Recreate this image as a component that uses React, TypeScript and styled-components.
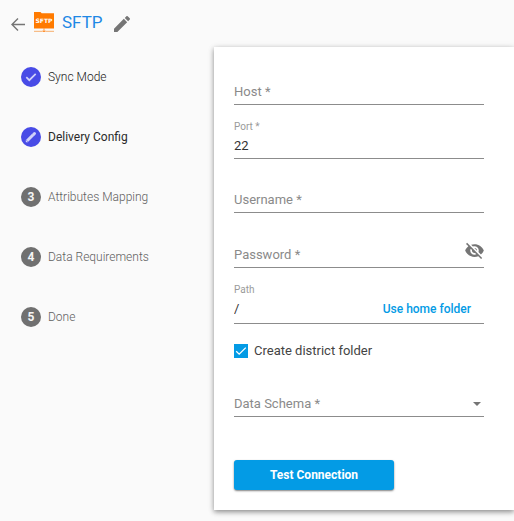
import React, { useState } from "react";
import styled, { createGlobalStyle } from "styled-components";

const GlobalStyle = createGlobalStyle`
  *, *::before, *::after { box-sizing: border-box; }
  html, body { margin: 0; background: #fafafa; overflow-x: hidden; }
  body, button, input, select {
    font-family: Roboto, "Liberation Sans", sans-serif;
    font-size: 13px;
  }
`;

const Page = styled.div`
  min-height: 100vh;
  background: #fafafa;
  color: #424242;
`;

const Header = styled.header`
  display: flex;
  align-items: center;
  height: 47px;
  padding: 0 10px;
`;

const IconButton = styled.button`
  display: flex;
  flex: none;
  align-items: center;
  justify-content: center;
  padding: 0;
  border: 0;
  background: transparent;
  color: #757575;
  cursor: pointer;
`;

const Brand = styled.div`
  display: flex;
  align-items: center;
  gap: 8px;
  margin: 0 11px 4px 8px;
`;

const Title = styled.h1`
  margin: 0;
  font-size: 17px;
  font-weight: 400;
  line-height: 20px;
  color: #1e88e5;
`;

const Body = styled.div`
  display: grid;
  grid-template-columns: 214px minmax(0, 1fr);
  align-items: start;
`;

const Steps = styled.ol`
  display: flex;
  flex-direction: column;
  gap: 40px;
  margin: 0;
  padding: 20px 0 0 21px;
  list-style: none;
`;

type StepState = "done" | "active" | "pending";

const stepColor: Record<StepState, string> = {
  done: "#202020",
  active: "#2a2a2a",
  pending: "#606060",
};

const Step = styled.li<{ $state: StepState }>`
  display: flex;
  align-items: center;
  gap: 7px;
  height: 20px;
  font-size: 12px;
  font-weight: ${({ $state }) => ($state === "active" ? 400 : 300)};
  color: ${({ $state }) => stepColor[$state]};
`;

const Badge = styled.span<{ $state: StepState }>`
  display: flex;
  align-items: center;
  justify-content: center;
  width: 20px;
  height: 20px;
  border-radius: 50%;
  background: ${({ $state }) => ($state === "pending" ? "#707070" : "#484be6")};
  color: ${({ $state }) => ($state === "pending" ? "#f5f5f5" : "#d0d1fa")};
  font-size: 12px;
  font-weight: 700;
`;

const Card = styled.main`
  padding: 18px 20px 20px;
  background: #fff;
  box-shadow: 0 2px 5px rgba(0, 0, 0, 0.4), 0 1px 8px rgba(0, 0, 0, 0.08);
`;

const Form = styled.form`
  display: flex;
  flex-direction: column;
  gap: 14px;
  max-width: 250px;
`;

const FieldBox = styled.div`
  display: grid;
  grid-template-columns: minmax(0, 1fr) auto;
  grid-template-rows: 14px auto;
  align-items: end;
  border-bottom: 1px solid #8c8c8c;
`;

const FieldLabel = styled.label<{ $floating: boolean }>`
  grid-column: 1;
  grid-row: ${({ $floating }) => ($floating ? 1 : 2)};
  z-index: 1;
  pointer-events: none;
  color: ${({ $floating }) => ($floating ? "#9a9a9a" : "#8a8a8a")};
  font-size: ${({ $floating }) => ($floating ? "10px" : "13px")};
  line-height: ${({ $floating }) => ($floating ? "12px" : "26px")};
  height: ${({ $floating }) => ($floating ? "12px" : "25px")};
`;

const TextInput = styled.input`
  grid-column: 1;
  grid-row: 2;
  align-self: start;
  width: 100%;
  height: 25px;
  padding: 0;
  border: 0;
  outline: 0;
  background: transparent;
  color: #333;
`;

const SelectInput = styled.select`
  grid-column: 1 / -1;
  grid-row: 2;
  width: 100%;
  height: 25px;
  padding: 0;
  border: 0;
  outline: 0;
  appearance: none;
  background: transparent;
  color: #333;
`;

const Suffix = styled.div<{ $height: number; $inset: number }>`
  grid-column: 2;
  grid-row: 2;
  display: flex;
  align-items: center;
  height: ${({ $height }) => $height}px;
  padding-right: ${({ $inset }) => $inset}px;
`;

const VisibilityButton = styled(IconButton)`
  align-self: flex-start;
  height: 18px;
`;

const TextButton = styled.button`
  padding: 0 0 2px;
  border: 0;
  background: transparent;
  color: #039be5;
  font-size: 12px;
  font-weight: 500;
  line-height: 16px;
  cursor: pointer;
`;

const CheckRow = styled.label`
  display: flex;
  align-items: center;
  gap: 6px;
  height: 25px;
  line-height: 25px;
  color: #444;
  cursor: pointer;
`;

const CheckBoxFrame = styled.span`
  display: grid;
  width: 14px;
  height: 14px;

  > * { grid-area: 1 / 1; }
  > svg { pointer-events: none; }
`;

const CheckInput = styled.input`
  width: 14px;
  height: 14px;
  margin: 0;
  appearance: none;
  border: 1px solid #757575;

  &:checked {
    border-color: #039be5;
    background: #039be5;
  }
`;

const SubmitButton = styled.button`
  align-self: flex-start;
  width: 160px;
  height: 30px;
  margin-top: 29px;
  padding: 0;
  border: 0;
  border-radius: 3px;
  background: #039be5;
  box-shadow: 0 1px 2px rgba(0, 0, 0, 0.5);
  color: #fff;
  font-size: 12px;
  font-weight: 700;
  cursor: pointer;
`;

const ArrowIcon = () => (
  <svg width="16" height="16" viewBox="0 0 16 16" fill="none" stroke="#757575" strokeWidth="1.4" aria-hidden="true">
    <path d="M15 8.5H2.2M8 2.5L2 8.5l6 6" />
  </svg>
);

const PencilIcon = ({ size }: { size: number }) => (
  <svg width={size} height={size} viewBox="3 3 18 18" fill="currentColor" aria-hidden="true">
    <path d="M3 17.25V21h3.75L17.81 9.94l-3.75-3.75L3 17.25zM20.71 7.04a1 1 0 0 0 0-1.41l-2.34-2.34a1 1 0 0 0-1.41 0l-1.83 1.83 3.75 3.75 1.83-1.83z" />
  </svg>
);

const StepPencilIcon = () => (
  <svg width="12" height="12" viewBox="0 0 12 12" fill="none" stroke="currentColor" aria-hidden="true">
    <path d="M2.2 9.8L8.2 3.8" strokeWidth="3" />
    <path d="M8.9 3.1l.6-.6" strokeWidth="3" strokeLinecap="round" />
    <path d="M.8 11.2v-2.4l2.4 2.4z" fill="currentColor" stroke="none" />
  </svg>
);

const CheckIcon = () => (
  <svg width="14" height="14" viewBox="0 0 14 14" fill="none" stroke="currentColor" strokeWidth="1.7" aria-hidden="true">
    <path d="M2.3 7.2l3 3 6.4-6.4" />
  </svg>
);

const FolderIcon = () => (
  <svg width="20" height="20" viewBox="0 0 20 20" aria-hidden="true">
    <path d="M0 0h6.5l1.2 1.3H20V16.6H0z" fill="#ff7a00" />
    <path d="M10 16v2" stroke="#ff9a40" strokeWidth="1" />
    <path d="M0 19.3h8M12 19.3h8" stroke="#f7ae6c" strokeWidth="1" />
    <rect x="8.5" y="18.4" width="3" height="1.6" fill="#ff9232" />
    <text x="10" y="11" textAnchor="middle" fill="#fff" fontFamily="DejaVu Sans, sans-serif" fontSize="6" fontWeight="700">
      SFTP
    </text>
  </svg>
);

const HiddenIcon = () => (
  <svg width="19" height="17" viewBox="1 2 22 20" fill="#757575" aria-hidden="true">
    <path d="M12 7c2.76 0 5 2.24 5 5 0 .65-.13 1.26-.36 1.83l2.92 2.92c1.51-1.26 2.7-2.89 3.43-4.75-1.73-4.39-6-7.5-11-7.5-1.4 0-2.74.25-3.98.7l2.16 2.16C10.74 7.13 11.35 7 12 7zM2 4.27l2.28 2.28.46.46C3.08 8.3 1.78 10.02 1 12c1.73 4.39 6 7.5 11 7.5 1.55 0 3.03-.3 4.38-.84l.42.42L19.73 22 21 20.73 3.27 3 2 4.27zM7.53 9.8l1.55 1.55c-.05.21-.08.43-.08.65 0 1.66 1.34 3 3 3 .22 0 .44-.03.65-.08l1.55 1.55c-.67.33-1.41.53-2.2.53-2.76 0-5-2.24-5-5 0-.79.2-1.53.53-2.2zm4.31-.78l3.15 3.15.02-.16c0-1.66-1.34-3-3-3l-.17.01z" />
  </svg>
);

const CaretIcon = () => (
  <svg width="8" height="4" viewBox="0 0 8 4" fill="#757575" aria-hidden="true">
    <path d="M0 0h8L4 4z" />
  </svg>
);

const steps: { label: string; state: StepState }[] = [
  { label: "Sync Mode", state: "done" },
  { label: "Delivery Config", state: "active" },
  { label: "Attributes Mapping", state: "pending" },
  { label: "Data Requirements", state: "pending" },
  { label: "Done", state: "pending" },
];

interface FieldProps {
  id: string;
  label: string;
  type?: string;
  initial?: string;
  children?: React.ReactNode;
}

function Field({ id, label, type = "text", initial = "", children }: FieldProps) {
  const [value, setValue] = useState(initial);
  const [focused, setFocused] = useState(false);
  return (
    <FieldBox>
      <FieldLabel htmlFor={id} $floating={focused || value !== ""}>{label}</FieldLabel>
      <TextInput
        id={id}
        type={type}
        value={value}
        onChange={(e) => setValue(e.target.value)}
        onFocus={() => setFocused(true)}
        onBlur={() => setFocused(false)}
      />
      {children}
    </FieldBox>
  );
}

export default function App() {
  const [showPassword, setShowPassword] = useState(false);
  const [schema, setSchema] = useState("");

  return (
    <Page>
      <GlobalStyle />
      <Header>
        <IconButton type="button" aria-label="Back"><ArrowIcon /></IconButton>
        <Brand>
          <FolderIcon />
          <Title>SFTP</Title>
        </Brand>
        <IconButton type="button" aria-label="Edit name"><PencilIcon size={16} /></IconButton>
      </Header>
      <Body>
        <Steps>
          {steps.map(({ label, state }, i) => (
            <Step key={label} $state={state} aria-current={state === "active" ? "step" : undefined}>
              <Badge $state={state}>
                {state === "done" && <CheckIcon />}
                {state === "active" && <StepPencilIcon />}
                {state === "pending" && i + 1}
              </Badge>
              {label}
            </Step>
          ))}
        </Steps>
        <Card>
          <Form onSubmit={(e) => e.preventDefault()}>
            <Field id="host" label="Host *" />
            <Field id="port" label="Port *" initial="22" />
            <Field id="username" label="Username *" />
            <Field id="password" label="Password *" type={showPassword ? "text" : "password"}>
              <Suffix $height={26} $inset={0}>
                <VisibilityButton type="button" aria-label="Toggle password visibility" onClick={() => setShowPassword(!showPassword)}>
                  <HiddenIcon />
                </VisibilityButton>
              </Suffix>
            </Field>
            <Field id="path" label="Path" initial="/">
              <Suffix $height={27} $inset={13}>
                <TextButton type="button">Use home folder</TextButton>
              </Suffix>
            </Field>
            <CheckRow>
              <CheckBoxFrame>
                <CheckInput type="checkbox" defaultChecked />
                <svg width="14" height="14" viewBox="0 0 14 14" fill="none" stroke="#fff" strokeWidth="1.3" aria-hidden="true">
                  <path d="M2.2 7.2l3 3 6.6-6.6" />
                </svg>
              </CheckBoxFrame>
              Create district folder
            </CheckRow>
            <FieldBox>
              <FieldLabel htmlFor="schema" $floating={schema !== ""}>Data Schema *</FieldLabel>
              <SelectInput id="schema" value={schema} onChange={(e) => setSchema(e.target.value)}>
                <option value="" />
              </SelectInput>
              <Suffix $height={25} $inset={3}><CaretIcon /></Suffix>
            </FieldBox>
            <SubmitButton type="submit">Test Connection</SubmitButton>
          </Form>
        </Card>
      </Body>
    </Page>
  );
}
